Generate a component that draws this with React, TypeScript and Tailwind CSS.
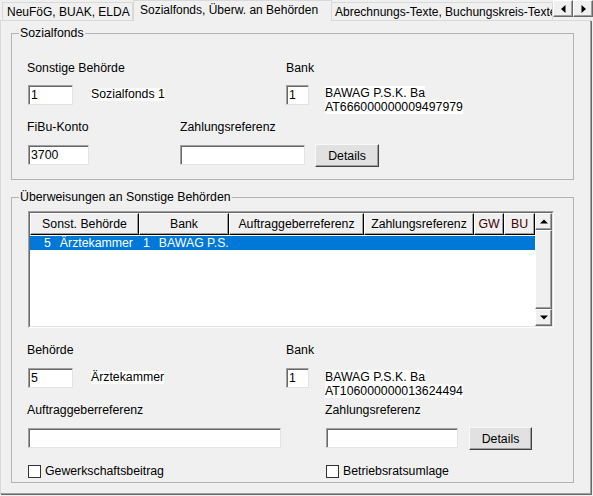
import React from "react";

function TextBox({ className, value }: { className: string; value?: string }) {
  return (
    <div
      className={
        "h-[20px] bg-white border-t border-l border-[#a0a0a0] border-r-[#e3e3e3] border-b-[#e3e3e3] border-r border-b shadow-[inset_1px_1px_0_#696969] pl-[2px] pt-[2px] leading-[15px] shrink-0 " +
        className
      }
    >
      {value}
    </div>
  );
}

function Btn({ className, label }: { className: string; label: string }) {
  return (
    <div
      className={
        "h-[23px] bg-[#e1e1e1] border border-t-[#f8f8f8] border-l-[#f8f8f8] border-r-[#404040] border-b-[#404040] shadow-[inset_-1px_-1px_0_#a0a0a0] flex items-center justify-center shrink-0 " +
        className
      }
    >
      {label}
    </div>
  );
}

function Raised({ className, children }: { className: string; children?: React.ReactNode }) {
  return (
    <div
      className={
        "bg-[#f0f0f0] border border-t-white border-l-white border-r-[#696969] border-b-[#696969] shadow-[inset_-1px_-1px_0_#a0a0a0] flex items-center justify-center shrink-0 " +
        className
      }
    >
      {children}
    </div>
  );
}

function HeadCell({ className, label }: { className: string; label: string }) {
  return (
    <div
      className={
        "h-[22px] bg-[#f0f0f0] border-r border-b border-r-black border-b-black border-t border-l border-t-white border-l-white shadow-[inset_-1px_-1px_0_#a0a0a0] flex items-center justify-center shrink-0 whitespace-nowrap overflow-hidden " +
        className
      }
    >
      {label}
    </div>
  );
}

function CheckBox({ label }: { label: string }) {
  return (
    <div className="flex items-center h-[14px]">
      <div className="ml-[1px] w-[13px] h-[13px] bg-white border border-[#333333] shrink-0" />
      <span className="ml-[4px] whitespace-nowrap">{label}</span>
    </div>
  );
}

export default function App() {
  return (
    <div className="relative w-[593px] h-[496px] bg-[#f0f0f0] overflow-hidden font-['Liberation_Sans',Arial,sans-serif] text-[12.3px] leading-[14px] text-black">
      {/* Tab strip */}
      <div className="flex items-start h-[20px] text-[12px]">
        <div className="mt-[2px] ml-[2px] w-[131px] h-[18px] border border-b-0 border-[#d9d9d9] pl-[4px] pt-[2px] whitespace-nowrap shrink-0">
          NeuFöG, BUAK, ELDA
        </div>
        <div className="relative z-10 w-[199px] h-[21px] bg-[#f0f0f0] border border-b-0 border-[#d9d9d9] pl-[6px] pt-[2px] whitespace-nowrap shrink-0">
          Sozialfonds, Überw. an Behörden
        </div>
        <div className="mt-[2px] w-[221px] h-[18px] border border-b-0 border-l-0 border-[#d9d9d9] pl-[3px] pt-[2px] whitespace-nowrap overflow-hidden shrink-0">
          Abrechnungs-Texte, Buchungskreis-Texte
        </div>
        <Raised className="w-[20px] h-[17px]">
          <svg width="5" height="8" viewBox="0 0 5 8">
            <path d="M4.5 0 L0 4 L4.5 8 Z" fill="#000" />
          </svg>
        </Raised>
        <Raised className="w-[20px] h-[17px]">
          <svg width="5" height="8" viewBox="0 0 5 8">
            <path d="M0.5 0 L5 4 L0.5 8 Z" fill="#000" />
          </svg>
        </Raised>
      </div>

      {/* Panel */}
      <div className="relative z-0 w-[591px] h-[474px] border-t border-l border-[#d9d9d9] border-r border-b border-r-[#a0a0a0] border-b-[#a0a0a0] shadow-[1px_1px_0_#696969]">
        {/* Group 1 */}
        <div className="relative ml-[10px] mt-[12px] w-[563px] h-[147px] border border-[#b4b4b4]">
          <span className="absolute left-[7px] top-[-8px] bg-[#f0f0f0] px-[1px]">Sozialfonds</span>
          <div className="pl-[15px]">
            <div className="mt-[27px] h-[14px] flex">
              <div className="w-[259px] shrink-0">Sonstige Behörde</div>
              <div>Bank</div>
            </div>
            <div className="mt-[10px] h-[20px] flex items-start">
              <div className="w-[259px] flex items-start shrink-0">
                <TextBox className="ml-[1px] w-[45px]" value="1" />
                <span className="ml-[18px] mt-[3px] bg-white leading-[13px] whitespace-nowrap">Sozialfonds 1</span>
              </div>
              <TextBox className="w-[23px]" value="1" />
              <div className="ml-[16px] mt-[1px] flex flex-col whitespace-nowrap">
                <span className="bg-white w-fit leading-[14px]">BAWAG P.S.K. Ba</span>
                <span className="bg-white w-fit leading-[14px]">AT666000000009497979</span>
              </div>
            </div>
            <div className="mt-[15px] h-[14px] flex">
              <div className="w-[153px] shrink-0">FiBu-Konto</div>
              <div>Zahlungsreferenz</div>
            </div>
            <div className="mt-[10px] h-[23px] flex items-start">
              <div className="w-[153px] shrink-0">
                <TextBox className="mt-[1px] ml-[1px] w-[61px]" value="3700" />
              </div>
              <TextBox className="mt-[1px] w-[125px]" />
              <Btn className="ml-[10px] w-[64px]" label="Details" />
            </div>
          </div>
        </div>

        {/* Group 2 */}
        <div className="relative ml-[10px] mt-[17px] w-[563px] h-[286px] border border-[#b4b4b4]">
          <span className="absolute left-[7px] top-[-8px] bg-[#f0f0f0] px-[1px]">Überweisungen an Sonstige Behörden</span>

          {/* List */}
          <div className="mt-[13px] ml-[16px] w-[526px] h-[117px] border border-t-[#a0a0a0] border-l-[#a0a0a0] border-r-white border-b-white">
            <div className="w-full h-full border border-t-[#696969] border-l-[#696969] border-r-[#e3e3e3] border-b-[#e3e3e3] flex">
              <div className="w-[505px] h-full bg-white shrink-0">
                <div className="flex">
                  <HeadCell className="w-[109px]" label="Sonst. Behörde" />
                  <HeadCell className="w-[90px]" label="Bank" />
                  <HeadCell className="w-[135px]" label="Auftraggeberreferenz" />
                  <HeadCell className="w-[110px]" label="Zahlungsreferenz" />
                  <HeadCell className="w-[30px] text-[#3c0000]" label="GW" />
                  <HeadCell className="w-[31px] text-[#3c0000]" label="BU" />
                </div>
                <div className="mt-[1px] h-[14px] bg-[#0078d7] text-white flex items-center whitespace-nowrap">
                  <div className="w-[109px] flex shrink-0">
                    <span className="ml-[14px]">5</span>
                    <span className="ml-[9px]">Ärztekammer</span>
                  </div>
                  <div className="flex">
                    <span className="ml-[4px]">1</span>
                    <span className="ml-[9px]">BAWAG P.S.</span>
                  </div>
                </div>
              </div>
              <div className="w-[17px] h-full flex flex-col shrink-0 bg-[#f0f0f0]">
                <Raised className="w-[17px] h-[17px]">
                  <svg width="8" height="5" viewBox="0 0 8 5">
                    <path d="M0 4.5 L4 0.5 L8 4.5 Z" fill="#000" />
                  </svg>
                </Raised>
                <Raised className="w-[17px] flex-1" />
                <Raised className="w-[17px] h-[17px]">
                  <svg width="8" height="5" viewBox="0 0 8 5">
                    <path d="M0 0.5 L4 4.5 L8 0.5 Z" fill="#000" />
                  </svg>
                </Raised>
              </div>
            </div>
          </div>

          <div className="pl-[15px]">
            <div className="mt-[15px] h-[14px] flex">
              <div className="w-[259px] shrink-0">Behörde</div>
              <div>Bank</div>
            </div>
            <div className="mt-[11px] h-[20px] flex items-start">
              <div className="w-[259px] flex items-start shrink-0">
                <TextBox className="ml-[1px] w-[45px]" value="5" />
                <span className="ml-[18px] mt-[3px] bg-white leading-[13px] whitespace-nowrap">Ärztekammer</span>
              </div>
              <TextBox className="w-[23px]" value="1" />
              <div className="ml-[16px] mt-[2px] flex flex-col whitespace-nowrap">
                <span className="bg-white w-fit leading-[14px]">BAWAG P.S.K. Ba</span>
                <span className="bg-white w-fit leading-[14px]">AT106000000013624494</span>
              </div>
            </div>
            <div className="mt-[15px] h-[14px] flex">
              <div className="w-[298px] shrink-0">Auftraggeberreferenz</div>
              <div>Zahlungsreferenz</div>
            </div>
            <div className="mt-[10px] h-[23px] flex items-start">
              <div className="w-[298px] shrink-0">
                <TextBox className="mt-[1px] ml-[1px] w-[253px]" />
              </div>
              <TextBox className="mt-[1px] ml-[1px] w-[132px]" />
              <Btn className="ml-[11px] w-[63px]" label="Details" />
            </div>
            <div className="mt-[14px] h-[14px] flex">
              <div className="w-[298px] shrink-0">
                <CheckBox label="Gewerkschaftsbeitrag" />
              </div>
              <CheckBox label="Betriebsratsumlage" />
            </div>
          </div>
        </div>
      </div>
    </div>
  );
}
